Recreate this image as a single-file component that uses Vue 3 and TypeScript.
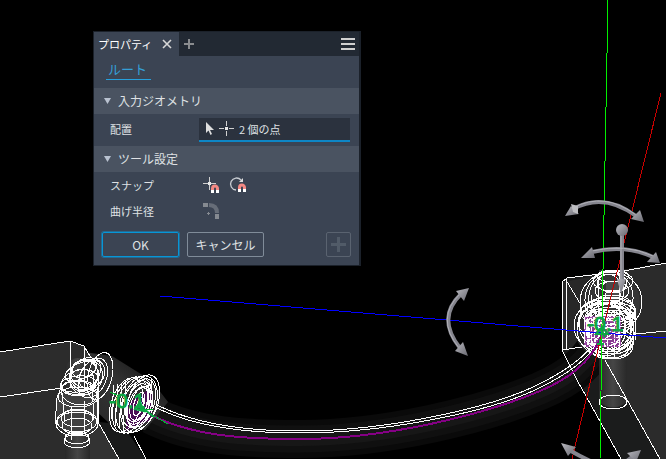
<script setup lang="ts">
import { ref } from 'vue'

interface Ring {
  x: number
  y: number
  rx: number
  ry: number
  a: number
}

const ring = (x: number, y: number, rx: number, ry: number, a = 0): Ring => ({ x, y, rx, ry, a })

// Wireframe of the right fitting
const rightRings: Ring[] = [
  ring(611, 302, 31, 30), ring(609, 299, 24, 27, 10), ring(606, 296, 17, 22, 12), ring(613, 281, 20, 10),
  ring(612, 283, 15, 9), ring(613, 295, 8, 4), ring(612, 291, 17, 10), ring(613, 287, 11, 6),
  ring(612, 305, 20, 10), ring(610, 309, 25, 12), ring(608, 312, 28, 14), ring(612, 316, 22, 9),
  ring(603, 326, 29, 26), ring(604, 329, 27, 27), ring(602, 325, 23, 22), ring(609, 337, 25, 22),
  ring(611, 332, 23, 20), ring(606, 330, 20, 20), ring(600, 324, 16, 15), ring(604, 334, 15, 16),
  ring(613, 346, 20, 13), ring(611, 341, 23, 13), ring(612, 350, 16, 8), ring(613, 322, 20, 12),
  ring(616, 328, 18, 22), ring(609, 319, 24, 9), ring(610, 314, 25, 10, -8), ring(613, 310, 22, 9, 8),
  ring(611, 326, 25, 24), ring(614, 336, 20, 18), ring(604, 322, 26, 18), ring(613, 276, 16, 6)
]

// Wireframe of the left elbow
const elbowRings: Ring[] = [
  ring(100, 376, 12, 24, 14), ring(93, 378, 13, 21, 24), ring(88, 373, 17, 15, -20), ring(84, 375, 14, 15),
  ring(81, 371, 17, 8, -24), ring(84, 369, 12, 9, -20), ring(90, 374, 9, 15, 30), ring(78, 384, 18, 8, -6),
  ring(78, 388, 16, 8), ring(78, 397, 20, 10), ring(79, 393, 18, 12, 8), ring(77, 421, 20, 11),
  ring(77, 424, 21, 12), ring(77, 426, 15, 8), ring(77, 418, 16, 9), ring(77, 441, 13, 7), ring(77, 438, 12, 6),
  ring(86, 377, 16, 18, 30), ring(82, 380, 12, 11), ring(80, 382, 19, 12, -12)
]

const discRings: Ring[] = [
  ring(126, 405, 15, 28, 18), ring(130, 405, 16, 29, 18), ring(134, 405, 17, 29, 18), ring(139, 404, 17, 29, 18),
  ring(143, 402, 15, 28, 18), ring(137, 404, 14, 24, 18), ring(138, 404, 11, 21, 18), ring(139, 404, 8, 17, 18),
  ring(139, 404, 5, 12, 18), ring(140, 404, 3, 7, 18), ring(141, 403, 13, 25, 18), ring(139, 404, 10, 19, 24)
]

const guide = 'M151 415C195 437 248 439 300 439C386 439 486 414 540 391C566 380 591 364 602 334'
const edgeUpper = 'M157 405C195 424 246 431 300 431C386 431 480 409 524 391C557 377 581 360 590 348'
const edgeLower = 'M157 408C195 427 246 433 300 433C386 433 482 412 526 394C559 380 583 363 592 350'

const inputOpen = ref(true)
const toolOpen = ref(true)
</script>

<template>
  <main class="workspace">
    <svg class="scene" viewBox="0 0 666 459" preserveAspectRatio="xMidYMid slice" aria-hidden="true">
      <defs>
        <linearGradient id="metal" x1="0" y1="0" x2="1" y2="1">
          <stop offset="0" stop-color="#b9b9c0" />
          <stop offset="1" stop-color="#686870" />
        </linearGradient>
        <linearGradient id="sleeve" x1="0" y1="1" x2="1" y2="0">
          <stop offset="0" stop-color="#242424" />
          <stop offset=".5" stop-color="#353535" />
          <stop offset="1" stop-color="#0b0b0b" />
        </linearGradient>
        <linearGradient id="pipe">
          <stop offset="0" stop-color="#292929" />
          <stop offset=".5" stop-color="#464646" />
          <stop offset="1" stop-color="#292929" />
        </linearGradient>
      </defs>

      <!-- solid bodies -->
      <path d="M0 352L70 341L84 346L98 372V459H0Z" fill="#2c2c2c" />
      <path d="M70 388L98 395V422L119 459H70Z" fill="#333" />
      <path d="M98 422L122 424L146 459H119Z" fill="#1a1b1b" />
      <path d="M562 284L567 278L666 263V459H621L562 350Z" fill="#1b1c1c" />
      <path d="M590 276L666 263V459H660L605 360Z" fill="#2b2b2b" />
      <path d="M562 282L590 277L580 346L562 350Z" fill="#282828" />

      <g fill="none">
        <path :d="guide" stroke="#0a0a0a" stroke-width="38" />
        <path :d="guide" stroke="#101010" stroke-width="27" />
        <path :d="guide" stroke="#171717" stroke-width="14" />
      </g>
      <path d="M84 352L112 356L152 381L168 402L145 430L110 424L80 396Z" fill="url(#sleeve)" />
      <path d="M65 366Q78 350 90 366V459H65Z" fill="url(#pipe)" />
      <path d="M57 393H97V424Q77 447 57 424Z" fill="#414141" />
      <path d="M599 270H627V402Q613 413 599 402Z" fill="url(#pipe)" />
      <ellipse cx="611" cy="302" rx="29" ry="29" fill="#343434" />
      <ellipse cx="604" cy="333" rx="28" ry="24" fill="#303030" />
      <ellipse cx="136" cy="405" rx="18" ry="29" transform="rotate(18 136 405)" fill="#303030" />
      <path d="M126 405L152 387L151 420L126 431Z" fill="#4b1155" />
      <path d="M584 316H621V347H584Z" fill="#873e91" />
      <path d="M606 281H620V303H606Z" fill="#4a4a4a" />

      <g class="wire">
        <path d="M0 352L70 341L84 346L91 358M70 341V388M84 346V392M0 397L62 388M98 370V422L119 459M134 436L146 459" />
        <path d="M57 398L55 424M97 388V425M62 385L57 398M71 406V440M84 401V433M61 383L65 421M92 384L94 420" />
        <path d="M562 350V282L567 278L600 274M566 278V350M566 280L581 305M562 350L582 347M562 350L577 380L621 459M605 360L660 459M624 271L666 263M636 334L666 331" />
        <path d="M587 305V345M591 295V350M619 275V350M630 306V350M635 315V340M598 280V354M607 314V358M614 312V357" />
        <path d="M114 385L111 419M118 384L115 426M122 383L119 429M126 382L123 432M151 379L153 407M148 383L149 413" />
        <ellipse v-for="(e, i) in elbowRings" :key="'e' + i" :cx="e.x" :cy="e.y" :rx="e.rx" :ry="e.ry" :transform="`rotate(${e.a} ${e.x} ${e.y})`" />
        <ellipse v-for="(e, i) in discRings" :key="'d' + i" :cx="e.x" :cy="e.y" :rx="e.rx" :ry="e.ry" :transform="`rotate(${e.a} ${e.x} ${e.y})`" />
        <ellipse v-for="(e, i) in rightRings" :key="'r' + i" :cx="e.x" :cy="e.y" :rx="e.rx" :ry="e.ry" :transform="`rotate(${e.a} ${e.x} ${e.y})`" />
        <ellipse cx="613" cy="402" rx="14" ry="7" />
        <path :d="edgeUpper" />
        <path :d="edgeLower" />
      </g>
      <path d="M585 317H620V346H585ZM590 321H615V342H590ZM586 331H619M600 319V345M587 325H619M587 338H619" fill="none" stroke="#a14daa" stroke-dasharray="3 2" shape-rendering="crispEdges" />
      <path :d="guide" fill="none" stroke="#850085" stroke-width="2" shape-rendering="crispEdges" />

      <!-- axes -->
      <g fill="none" shape-rendering="crispEdges">
        <path d="M160 296L602 333L666 338" stroke="#00f" />
        <path d="M661 93L602 333L572 459" stroke="#c80000" />
        <path d="M608 0L602 324" stroke="#00f000" />
        <path d="M602 324L600 459" stroke="#00f000" />
        <path d="M110 392L119 396M140 408L168 424M134 409H153" stroke="#00b830" />
      </g>
      <g fill="none" stroke="#0ba744" stroke-width="2">
        <path d="M135 409L140 402L144 411ZM140 396V402M144 409L154 417" />
        <path d="M596 334H608L602 327ZM602 331L605 337M600 339V344M597 344H604" />
      </g>
      <text class="dimension" x="109" y="408">-0.1</text>
      <text class="dimension" x="587" y="331">-0.1</text>

      <!-- rotation and translation handles -->
      <g fill="none" stroke="#85858e" stroke-width="4">
        <path d="M573 209Q604 192 636 216" />
        <path d="M592 252Q625 244 653 257" />
        <path d="M461 294Q436 318 460 348" />
        <path d="M571 451Q583 458 597 464M632 457L623 464" />
        <path d="M622 231V283" />
      </g>
      <g fill="none" stroke="#b1b1b8">
        <path d="M573 208Q604 191 636 215" />
        <path d="M592 251Q625 243 653 256" />
        <path d="M460 294Q435 318 459 348" />
        <path d="M621 234V282" />
      </g>
      <g fill="url(#metal)">
        <path d="M565 216L571 206L579 214Z" />
        <path d="M571 204L578 206V214L573 212Z" fill="#bdbdc1" />
        <path d="M644 222L640 210L631 219Z" />
        <path d="M581 258L592 247L595 258Z" />
        <path d="M660 263L656 252L647 262Z" />
        <path d="M469 288L456 291L464 301Z" />
        <path d="M468 356L463 342L455 351Z" />
        <path d="M561 443L576 447L568 456Z" />
        <path d="M641 450L627 453L636 462Z" />
        <path d="M617 279H626L621 294Z" />
        <circle cx="622" cy="230" r="6" />
      </g>
    </svg>

    <section class="panel" aria-label="プロパティ">
      <header class="tabs">
        <div class="tab">
          <span>プロパティ</span>
          <button class="icon-button" type="button" aria-label="閉じる">
            <svg width="10" height="10" viewBox="0 0 10 10"><path d="M1 1L9 9M9 1L1 9" stroke="#d8d8d8" stroke-width="1.6" /></svg>
          </button>
        </div>
        <button class="icon-button add-tab" type="button" aria-label="タブを追加">
          <svg width="10" height="10" viewBox="0 0 10 10"><path d="M5 0V10M0 5H10" stroke="#8a8c8f" stroke-width="2" /></svg>
        </button>
        <button class="icon-button menu" type="button" aria-label="メニュー">
          <svg width="14" height="12" viewBox="0 0 14 12"><path d="M0 1H14M0 6H14M0 11H14" stroke="#d0d0d0" stroke-width="2" /></svg>
        </button>
      </header>

      <div class="crumb"><a href="#route">ルート</a></div>

      <button class="group" type="button" :aria-expanded="inputOpen" @click="inputOpen = !inputOpen">
        <svg width="7" height="6" viewBox="0 0 7 6"><path d="M0 0H7L3.5 6Z" fill="#b9c2d0" /></svg>
        <span>入力ジオメトリ</span>
      </button>
      <div v-if="inputOpen" class="row placement">
        <label for="placement">配置</label>
        <button id="placement" class="field" type="button">
          <svg width="9" height="13" viewBox="0 0 9 13"><path d="M1 0V11L3.5 8.5L5.5 13L7 12L5 8H9Z" fill="#dedede" /></svg>
          <svg width="15" height="15" viewBox="0 0 15 15"><path d="M7.5 0V5M7.5 10V15M0 7.5H5M10 7.5H15" stroke="#d0d0d0" /><path d="M6 6H9V9H6Z" fill="#e8e8e8" /></svg>
          <span>2 個の点</span>
        </button>
      </div>

      <button class="group" type="button" :aria-expanded="toolOpen" @click="toolOpen = !toolOpen">
        <svg width="7" height="6" viewBox="0 0 7 6"><path d="M0 0H7L3.5 6Z" fill="#b9c2d0" /></svg>
        <span>ツール設定</span>
      </button>
      <template v-if="toolOpen">
        <div class="row">
          <span class="label">スナップ</span>
          <div class="tools">
            <button class="icon-button" type="button" aria-label="点にスナップ">
              <svg width="18" height="18" viewBox="0 0 18 18" fill="none">
                <path d="M7.5 1V6M7.5 9V14M1 7.5H6M9 7.5H14" stroke="#d0d0d0" /><path d="M6 6H9V9H6Z" fill="#e8e8e8" />
                <path d="M10.500 14V12.500A2.500 2.500 0 0 1 15.500 12.500V14" stroke="#f48984" stroke-width="3" /><path d="M9 14H12V17H9ZM14 14H17V17H14Z" fill="#fff" />
              </svg>
            </button>
            <button class="icon-button" type="button" aria-label="円にスナップ">
              <svg width="18" height="18" viewBox="0 0 18 18" fill="none">
                <path d="M7 14A6 6 0 1 1 12 4" stroke="#c8ccd2" stroke-width="1.3" /><path d="M14 2V6H10Z" fill="#dedede" />
                <path d="M10.500 13V11.500A2.500 2.500 0 0 1 15.500 11.500V13" stroke="#f48984" stroke-width="3" /><path d="M9 13H12V16H9ZM14 13H17V16H14Z" fill="#fff" />
              </svg>
            </button>
          </div>
        </div>
        <div class="row">
          <span class="label">曲げ半径</span>
          <div class="tools">
            <button class="icon-button" type="button" aria-label="曲げ半径を指定" disabled>
              <svg width="18" height="18" viewBox="0 0 18 18" fill="none">
                <path d="M7 3Q15 3 15 11" stroke="#666d78" stroke-width="4" />
                <path d="M1 1H6V5H1ZM13 12H17V17H13Z" fill="#858a91" /><path d="M6.5 10V13M5 11.5H8" stroke="#858a91" />
              </svg>
            </button>
          </div>
        </div>
      </template>

      <footer class="actions">
        <button class="action primary" type="button">OK</button>
        <button class="action" type="button">キャンセル</button>
        <button class="action more" type="button" aria-label="追加" disabled>
          <svg width="15" height="15" viewBox="0 0 15 15"><path d="M7.5 0V15M0 7.5H15" stroke="#515b68" stroke-width="3" /></svg>
        </button>
      </footer>
    </section>
  </main>
</template>

<style>
body {
  background: #000;
}
</style>

<style scoped>
.workspace {
  position: relative;
  height: 100vh;
  overflow: hidden;
  font-family: "Noto Sans CJK JP", "Noto Sans", sans-serif;
  font-size: 11px;
  line-height: 16px;
  color: #dfe1e4;
}

.scene {
  display: block;
  width: 100%;
  height: 100%;
}

.wire {
  fill: none;
  stroke: #fff;
  shape-rendering: crispEdges;
}

.dimension {
  font-family: "Liberation Sans", sans-serif;
  font-size: 21px;
  fill: #0ba744;
  stroke: #0ba744;
  stroke-width: 1px;
}

.panel {
  position: absolute;
  top: 31px;
  left: 93px;
  box-sizing: border-box;
  width: 268px;
  border: 1px solid #1b212a;
  border-right-width: 2px;
  background: #3b4453;
}

button {
  margin: 0;
  padding: 0;
  border: 0;
  background: none;
  color: inherit;
  font: inherit;
}

.tabs {
  display: flex;
  height: 24px;
  background: #222933;
}

.tab {
  display: flex;
  align-items: center;
  gap: 10px;
  padding: 0 7px 0 4px;
  background: #3b4453;
  color: #fff;
}

.icon-button {
  display: flex;
  align-items: center;
  justify-content: center;
}

.add-tab {
  width: 20px;
}

.menu {
  width: 22px;
  margin-left: auto;
}

.crumb {
  display: flex;
  align-items: flex-start;
  box-sizing: border-box;
  height: 32px;
  padding: 4px 12px;
}

.crumb a {
  padding: 1px 4px 2px 2px;
  border-bottom: 1px solid #27a0dc;
  color: #359fd6;
  font-size: 13px;
  text-decoration: none;
}

.group {
  display: flex;
  align-items: center;
  gap: 7px;
  width: 100%;
  height: 26px;
  padding-left: 10px;
  background: #4a5361;
  font-size: 12px;
}

.row {
  display: flex;
  align-items: center;
  height: 26px;
  padding: 0 9px 0 16px;
}

.placement {
  height: 32px;
}

.row label,
.label {
  width: 89px;
}

.placement label {
  padding-bottom: 3px;
}

.field {
  display: flex;
  flex: 1;
  align-items: center;
  box-sizing: border-box;
  gap: 5px;
  height: 24px;
  padding: 0 6px 1px;
  border-bottom: 2px solid #0d86c5;
  background: #2b323e;
}

.tools {
  display: flex;
  gap: 9px;
  padding-left: 3px;
}

.actions {
  display: flex;
  align-items: center;
  gap: 8px;
  height: 41px;
  padding: 0 8px;
}

.action {
  box-sizing: border-box;
  width: 77px;
  height: 25px;
  border: 1px solid #808c99;
  border-radius: 2px;
  font-size: 12px;
}

.primary {
  border-color: #0696d7;
  box-shadow: 0 0 0 1px #246a91;
}

.more {
  display: flex;
  align-items: center;
  justify-content: center;
  width: 25px;
  margin-left: auto;
  border-color: #5a6370;
}
</style>
